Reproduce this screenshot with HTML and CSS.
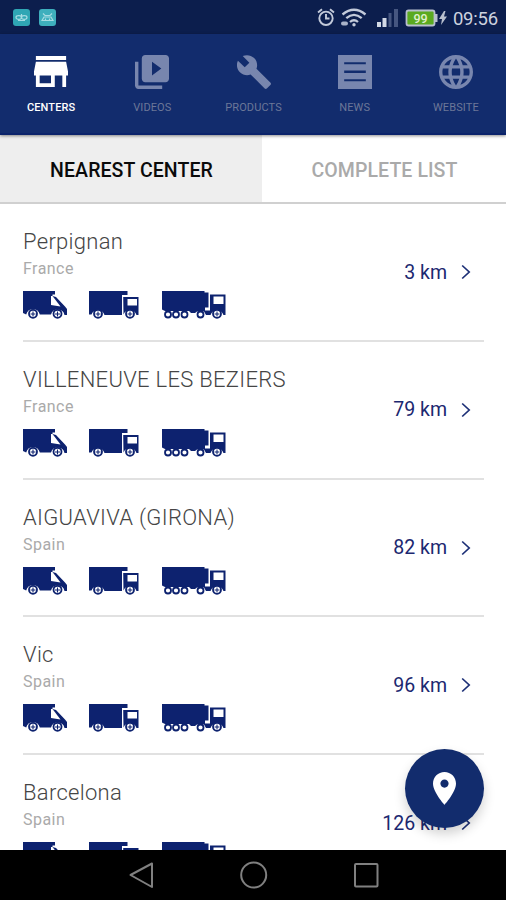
FILE: index.html
```html
<!DOCTYPE html>
<html lang="en">
<head>
<meta charset="utf-8">
<title>Centers</title>
<link rel="stylesheet" href="styles.css">
</head>
<body>
<svg class="defs" aria-hidden="true">
  <symbol id="van" viewBox="0 0 44 28">
    <path fill="#0d226f" d="M0 0H32V3.500H29.500V5L33 6L42 15.500L44 18V24H41.500A7 7 0 0 0 28 23.500H16.800A7 7 0 0 0 3.200 23.500L0 22Z"/>
    <path fill="#fff" d="M28 5H29.500L37.500 15.500L28 14Z"/>
    <g fill="#fff" stroke="#0d226f" stroke-width="1.800"><circle cx="10" cy="22.800" r="4"/><circle cx="34.500" cy="22.800" r="4"/></g>
    <path stroke="#0d226f" stroke-width="1.100" d="M10 20.500V25.500M7.500 23H12.500M34.500 20.500V25.500M32 23H37"/>
  </symbol>
  <symbol id="lorry" viewBox="0 0 50 28">
    <path fill="#0d226f" d="M0 0H38.500V4H33V24H15.500A7 7 0 0 0 2.500 23.500H0ZM34.200 6H49.500V24H47.500A7 7 0 0 0 34.500 23.500Z"/>
    <path fill="#fff" d="M38.500 8H48V14.500H38.500Z"/>
    <g fill="#fff" stroke="#0d226f" stroke-width="1.800"><circle cx="9" cy="22.800" r="4"/><circle cx="41" cy="22.800" r="4"/></g>
    <path stroke="#0d226f" stroke-width="1.100" d="M9 20.500V25.500M6.500 23H11.500M41 20.500V25.500M38.500 23H43.500"/>
  </symbol>
  <symbol id="semi" viewBox="0 0 64 28">
    <path fill="#0d226f" d="M0 0H42.500V1.500H46.500V16.500H43V19.500H48V3.500H63.500V24H61.500A7 7 0 0 0 48.500 24H44L42 20.500H35L33 22H29L27 20H3L0 18.500Z"/>
    <path fill="#fff" d="M51.500 5.500H61.500V13H51.500Z"/>
    <g fill="#fff" stroke="#0d226f" stroke-width="1.800"><circle cx="6" cy="23.500" r="3"/><circle cx="14" cy="23.500" r="3"/><circle cx="22.500" cy="23.500" r="3"/><circle cx="38.500" cy="23.500" r="3"/><circle cx="55" cy="22.800" r="4"/></g>
    <path stroke="#0d226f" stroke-width="1" d="M55 20.500V25.500M52.500 23H57.500"/>
  </symbol>
  <symbol id="chevron" viewBox="0 0 10 16"><path fill="none" stroke="#1c2f76" stroke-width="1.700" d="M1.200 1.500L8.200 8L1.200 14.500"/></symbol>
</svg>
<div class="screen">
  <header class="status">
    <svg class="app-icon" viewBox="0 0 17 17"><rect width="17" height="17" rx="3" fill="#2fa6b4"/><g fill="none" stroke="#a7dce3" stroke-width="1.200"><ellipse cx="5.800" cy="8.500" rx="2.800" ry="1.800"/><ellipse cx="11.200" cy="8.500" rx="2.800" ry="1.800"/><path d="M8.500 5V9M5 11.500H12"/></g></svg>
    <svg class="app-icon second" viewBox="0 0 17 17"><rect width="17" height="17" rx="3" fill="#3eafbd"/><path fill="none" stroke="#a7dce3" stroke-width="1.200" d="M4 4.500L6 6.500H11L13 4.500M3 11.500L5 8H12L14 11.500ZM6.500 9.500V11M10.500 9.500V11"/></svg>
    <svg class="indicators" viewBox="316 6 130 24">
      <g fill="none" stroke="#c3cada" stroke-width="1.900"><circle cx="325" cy="18.300" r="6.700"/><path d="M325 14V18.500H328.500M317 12.500L321 9.300M333 12.500L329 9.300"/></g>
      <g fill="none" stroke="#c3cada" stroke-width="2.300"><path d="M341.500 14.500Q353 5 364.500 14.500M345.300 18.200Q353 11.500 360.700 18.200M349 22Q353 18.500 357 22"/></g>
      <circle cx="353" cy="24.800" r="1.700" fill="#c3cada"/><path stroke="#aab3c9" stroke-width="4" stroke-linecap="round" d="M342 23.500H345"/>
      <path fill="#d3d9e5" d="M376 22H380V27H376ZM381.500 18H385.500V27H381.500Z"/><path fill="#465680" d="M387.500 13H390.500V27H387.500ZM393 9H397V27H393Z"/>
      <rect x="405.500" y="10.500" width="28" height="15" rx="2" fill="#5aaa20" stroke="#b8bfce" stroke-width="1.800"/><path fill="#b8bfce" d="M434 14H436.500V22H434ZM443 11L438 19H441L440 25L446 16.500H443L444.500 11Z"/>
      <text class="battery" x="419.500" y="22.500" text-anchor="middle">99</text>
    </svg>
    <span class="clock">09:56</span>
  </header>
  <nav class="nav">
    <a class="nav-item active"><svg class="store" viewBox="3 4 18 16" preserveAspectRatio="none"><path d="M20 4H4v2h16V4zm1 10v-2l-1-5H4l-1 5v2h1v6h10v-6h4v6h2v-6h1zm-9 4H6v-4h6v4z"/></svg><span>CENTERS</span></a>
    <a class="nav-item"><svg viewBox="2 2 20 20"><path d="M4 6H2v14c0 1.100.9 2 2 2h14v-2H4V6zm16-4H8c-1.100 0-2 .9-2 2v12c0 1.100.9 2 2 2h12c1.100 0 2-.9 2-2V4c0-1.100-.9-2-2-2zm-8 12v-8l5.500 4-5.500 4z"/></svg><span>VIDEOS</span></a>
    <a class="nav-item"><svg viewBox="1 1.500 22 21"><path d="M22.700 19l-9.100-9.100c.9-2.300.4-5-1.500-6.900-2-2-5-2.400-7.400-1.300L9 6 6 9 1.600 4.700C.4 7.100.9 10.100 2.900 12.100c1.900 1.900 4.600 2.400 6.900 1.500l9.100 9.100c.4.4 1 .4 1.400 0l2.300-2.300c.5-.4.5-1.100.1-1.400z"/></svg><span>PRODUCTS</span></a>
    <a class="nav-item"><svg viewBox="0 0 33 33"><path fill-rule="evenodd" d="M0 0H33V33H0ZM6 7V9H27V7ZM6 15V17.500H27V15ZM6 23.500V25.500H27V23.500Z"/></svg><span>NEWS</span></a>
    <a class="nav-item"><svg viewBox="2 2 20 20"><path d="M11.990 2C6.470 2 2 6.480 2 12s4.470 10 9.990 10C17.520 22 22 17.520 22 12S17.520 2 11.990 2zm6.930 6h-2.950c-.32-1.250-.78-2.450-1.380-3.560 1.840.63 3.370 1.910 4.330 3.560zM12 4.040c.83 1.200 1.480 2.530 1.910 3.960h-3.820c.43-1.430 1.080-2.760 1.910-3.960zM4.260 14C4.100 13.360 4 12.690 4 12s.1-1.360.26-2h3.380c-.08.66-.14 1.320-.14 2s.06 1.340.14 2H4.260zm.82 2h2.950c.32 1.250.78 2.450 1.380 3.560-1.840-.63-3.370-1.900-4.330-3.560zm2.950-8H5.080c.96-1.660 2.490-2.930 4.330-3.560C8.810 5.550 8.350 6.750 8.030 8zM12 19.960c-.83-1.200-1.480-2.530-1.910-3.960h3.820c-.43 1.430-1.080 2.760-1.910 3.960zM14.340 14H9.660c-.09-.66-.16-1.320-.16-2s.07-1.350.16-2h4.680c.09.65.16 1.320.16 2s-.07 1.340-.16 2zm.25 5.560c.6-1.110 1.060-2.310 1.380-3.560h2.950c-.96 1.650-2.490 2.930-4.330 3.560zM16.360 14c.08-.66.14-1.320.14-2s-.06-1.340-.14-2h3.380c.16.64.26 1.310.26 2s-.1 1.360-.26 2h-3.380z"/></svg><span>WEBSITE</span></a>
  </nav>
  <div class="tabs"><div class="tab selected">NEAREST CENTER</div><div class="tab">COMPLETE LIST</div></div>
  <main class="list">
    <article class="row"><div><h2>Perpignan</h2><p>France</p><div class="trucks"><svg class="van"><use href="#van"/></svg><svg class="lorry"><use href="#lorry"/></svg><svg class="semi"><use href="#semi"/></svg></div></div><div class="distance"><span>3 km</span><svg><use href="#chevron"/></svg></div></article>
    <article class="row"><div><h2>VILLENEUVE LES BEZIERS</h2><p>France</p><div class="trucks"><svg class="van"><use href="#van"/></svg><svg class="lorry"><use href="#lorry"/></svg><svg class="semi"><use href="#semi"/></svg></div></div><div class="distance"><span>79 km</span><svg><use href="#chevron"/></svg></div></article>
    <article class="row"><div><h2>AIGUAVIVA (GIRONA)</h2><p>Spain</p><div class="trucks"><svg class="van"><use href="#van"/></svg><svg class="lorry"><use href="#lorry"/></svg><svg class="semi"><use href="#semi"/></svg></div></div><div class="distance"><span>82 km</span><svg><use href="#chevron"/></svg></div></article>
    <article class="row"><div><h2>Vic</h2><p>Spain</p><div class="trucks"><svg class="van"><use href="#van"/></svg><svg class="lorry"><use href="#lorry"/></svg><svg class="semi"><use href="#semi"/></svg></div></div><div class="distance"><span>96 km</span><svg><use href="#chevron"/></svg></div></article>
    <article class="row"><div><h2>Barcelona</h2><p>Spain</p><div class="trucks"><svg class="van"><use href="#van"/></svg><svg class="lorry"><use href="#lorry"/></svg><svg class="semi"><use href="#semi"/></svg></div></div><div class="distance"><span>126 km</span><svg><use href="#chevron"/></svg></div></article>
  </main>
  <footer class="system">
    <svg viewBox="0 0 506 50"><g fill="none" stroke="#808080" stroke-width="2" stroke-linejoin="round"><path d="M152 13.500V37L130.500 25Z"/><circle cx="253.700" cy="25" r="12.500"/><rect x="355" y="14" width="22.500" height="22.500" rx="1"/></g></svg>
  </footer>
  <div class="fab"><svg viewBox="5 2 14 20"><path d="M12 2C8.130 2 5 5.130 5 9c0 5.250 7 13 7 13s7-7.750 7-13c0-3.870-3.130-7-7-7zm0 9.500c-1.380 0-2.500-1.120-2.500-2.500s1.120-2.500 2.500-2.500 2.500 1.120 2.500 2.500-1.120 2.500-2.500 2.500z"/></svg></div>
</div>
</body>
</html>
```
FILE: styles.css
```css
* { box-sizing: border-box; }
body { margin: 0; font-family: Roboto, "Liberation Sans", sans-serif; background: #fff; }
svg { display: block; flex: none; }
.defs { position: absolute; width: 0; height: 0; }
.screen { position: relative; width: 506px; height: 900px; display: flex; flex-direction: column; overflow: hidden; }
.status { flex: none; height: 34px; background: #0c1e4d; display: flex; align-items: center; padding: 1px 8px 0 13px; }
.app-icon { width: 17px; height: 17px; }
.second { margin-left: 9px; }
.indicators { width: 130px; height: 24px; margin-left: 261px; }
.battery { font: 500 12.500px Roboto, sans-serif; fill: #e0f0cf; }
.clock { margin-left: auto; color: #ccd2df; font-size: 18.500px; line-height: 24px; letter-spacing: -.2px; padding-top: 2px; }
.nav { position: relative; z-index: 1; flex: none; height: 101px; background: #122c6d; display: flex; border-bottom: 2px solid #0b236b; box-shadow: 0 1px 3px rgba(0,0,0,.45); }
.nav-item { flex: 1 1 0; display: flex; flex-direction: column; align-items: center; padding: 21px 0 0 1px; color: #6c7798; font-size: 11px; line-height: 14px; letter-spacing: .12px; }
.nav-item svg { width: 34px; height: 34px; fill: #7886ae; }
.nav-item .store { width: 34px; height: 31px; margin: 1px 0 2px; }
.nav-item span { margin-top: 12px; white-space: nowrap; }
.nav-item.active { color: #fff; font-weight: 500; }
.nav-item.active svg { fill: #fff; }
.tabs { flex: none; height: 69px; display: flex; border-bottom: 2px solid #d0d0d0; }
.tab { flex: 1; display: flex; align-items: center; justify-content: center; padding: 4px 0 0 1px; color: #aaa; font-size: 19.500px; font-weight: 500; letter-spacing: .08px; }
.tab.selected { flex: 0 0 262px; background: #eee; color: #0a0a0a; }
.list { flex: 1; min-height: 0; overflow: hidden; padding: 0 22px 0 23px; }
.row { height: 137.800px; display: flex; justify-content: space-between; border-bottom: 2px solid #e1e1e1; padding-top: 25px; }
h2 { margin: 0; font-size: 22px; line-height: 26px; font-weight: 300; color: #454545; letter-spacing: .3px; white-space: nowrap; }
p { margin: 4px 0 0; font-size: 16px; line-height: 20px; color: #aaa; letter-spacing: .45px; }
.trucks { display: flex; margin-top: 12px; }
.van { width: 44px; height: 28px; }
.lorry { width: 50px; height: 28px; margin-left: 22px; }
.semi { width: 64px; height: 28px; margin-left: 23px; }
.distance { display: flex; align-items: center; height: 24px; margin-top: 31px; padding-right: 13px; color: #1c2870; font-size: 19.500px; line-height: 24px; }
.distance span { padding-top: 1px; }
.distance svg { width: 10px; height: 16px; margin-left: 14px; }
.system { flex: none; height: 50px; background: #000; }
.system svg { width: 506px; height: 50px; }
.fab { position: absolute; left: 405px; top: 749px; width: 79px; height: 79px; border-radius: 50%; background: #122c6d; box-shadow: 0 6px 12px rgba(0,0,0,.18); display: flex; align-items: center; justify-content: center; }
.fab svg { width: 23px; height: 33px; fill: #fff; }
```
